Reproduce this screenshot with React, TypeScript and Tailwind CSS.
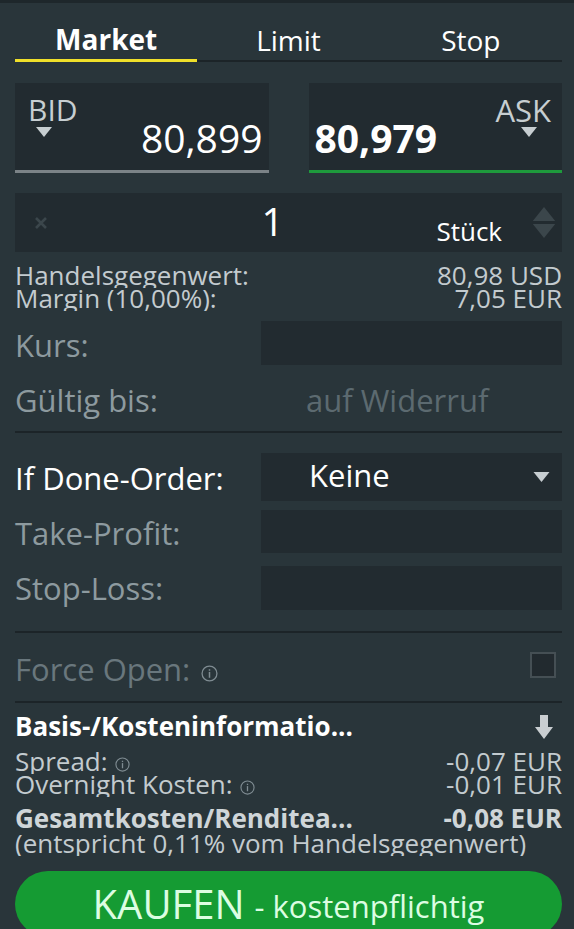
const font = { fontFamily: '"Open Sans", "Noto Sans", sans-serif' };

function Tri({ up = false, className = "" }: { up?: boolean; className?: string }) {
  return (
    <svg viewBox="0 0 16 10" className={className}>
      <path d={up ? "M0 10 L8 0 L16 10 Z" : "M0 0 L16 0 L8 10 Z"} fill="currentColor" />
    </svg>
  );
}

function Info({ size = "w-[15px] h-[15px] ml-[7px]" }: { size?: string }) {
  return (
    <svg viewBox="0 0 16 16" className={`inline-block ${size} align-[-1px] text-[#7f8c92]`}>
      <circle cx="8" cy="8" r="7" fill="none" stroke="currentColor" strokeWidth="1.2" />
      <rect x="7.3" y="6.5" width="1.4" height="5.5" fill="currentColor" />
      <rect x="7.3" y="4" width="1.4" height="1.4" fill="currentColor" />
    </svg>
  );
}

function Row({ label, value, bold = false }: { label: React.ReactNode; value?: string; bold?: boolean }) {
  return (
    <div
      className={`flex justify-between overflow-hidden text-[26px] leading-[18px] pt-[1px] ${
        bold ? "font-bold h-[25px] text-[#cfd5d8]" : "h-[23px] text-[#c3cbcf]"
      }`}
    >
      <span className="whitespace-nowrap">{label}</span>
      <span className="whitespace-nowrap">{value}</span>
    </div>
  );
}

export default function App() {
  return (
    <div className="w-[574px] h-[929px] overflow-hidden bg-[#29353a] text-white" style={font}>
      <div className="h-[3px] bg-[#1e272b]" />
      <div className="pl-[15px] pr-[12px]">
        {/* tabs */}
        <div className="grid grid-cols-3 h-[59px] items-end">
          <div className="h-full flex items-end justify-center pb-[3px] border-b-[3px] border-[#f0e02a] text-[28px] font-bold leading-[34px]">Market</div>
          <div className="h-full flex items-end justify-center pb-[3px] border-b-2 border-[#1c2428] text-[28px] leading-[34px]">Limit</div>
          <div className="h-full flex items-end justify-center pb-[3px] border-b-2 border-[#1c2428] text-[28px] leading-[34px]">Stop</div>
        </div>

        {/* bid / ask */}
        <div className="grid grid-cols-2 gap-10 mt-[21px]">
          <div className="h-[90px] bg-[#222b30] border-b-[3px] border-[#7b8387] flex justify-between pl-[13px] pr-[6px]">
            <div className="flex flex-col pt-[11px]">
              <span className="text-[30px] leading-[32px] text-[#c7ced1]">BID</span>
              <Tri className="w-[16px] h-[10px] ml-[8px] mt-[1px] text-[#c7ced1]" />
            </div>
            <span className="self-end pb-[11px] text-[39px] leading-[42px]">80,899</span>
          </div>
          <div className="h-[90px] bg-[#222b30] border-b-[3px] border-[#1e9a3c] flex justify-between pl-[6px] pr-[11px]">
            <span className="self-end pb-[11px] text-[39px] leading-[42px] font-bold">80,979</span>
            <div className="flex flex-col items-end pt-[11px]">
              <span className="text-[31px] leading-[32px] text-[#c7ced1]">ASK</span>
              <Tri className="w-[16px] h-[10px] mr-[14px] mt-[1px] text-[#c7ced1]" />
            </div>
          </div>
        </div>

        {/* quantity */}
        <div className="mt-[20px] h-[59px] bg-[#222b30] flex items-center pl-[20px] pr-[6px]">
          <svg viewBox="0 0 12 12" className="w-[12px] h-[12px] text-[#3b464b]">
            <path d="M1 1 L11 11 M11 1 L1 11" stroke="currentColor" strokeWidth="2.6" />
          </svg>
          <span className="flex-1 text-center text-[39px] leading-[42px] pl-[62px] pb-[4px]">1</span>
          <span className="text-[26px] leading-none self-end pb-[8px] mr-[30px]">Stück</span>
          <div className="flex flex-col gap-[3px]">
            <Tri up className="w-[24px] h-[14px] text-[#3b464b]" />
            <Tri className="w-[24px] h-[14px] text-[#3b464b]" />
          </div>
        </div>

        {/* info */}
        <div className="mt-[13px]">
          <Row label="Handelsgegenwert:" value="80,98 USD" />
          <Row label="Margin (10,00%):" value="7,05 EUR" />
        </div>

        {/* kurs / gültig */}
        <div className="grid grid-cols-[246px_1fr] items-center mt-[10px] text-[31px] text-[#8d9a9f]">
          <span className="leading-[40px] pt-[4px]">Kurs:</span>
          <div className="h-[44px] bg-[#222b30]" />
          <span className="mt-[13px] leading-[44px]">Gültig bis:</span>
          <span className="mt-[13px] leading-[44px] pl-[45px] text-[#5c6a70]">auf Widerruf</span>
        </div>

        <div className="mt-[9px] h-[2px] bg-[#1c2428]" />

        {/* if done */}
        <div className="grid grid-cols-[246px_1fr] items-center mt-[20px] text-[31px]">
          <span className="leading-[45px] pt-[3px]">If Done-Order:</span>
          <div className="h-[48px] bg-[#222b30] flex items-center justify-between pl-[48px] pr-[9px]">
            <span className="leading-[40px] pb-[4px]">Keine</span>
            <Tri className="w-[23px] h-[10px] text-[#c7ced1]" />
          </div>
          <span className="mt-[9px] leading-[40px] pt-[3px] text-[#8d9a9f]">Take-Profit:</span>
          <div className="mt-[9px] h-[43px] bg-[#222b30]" />
          <span className="mt-[13px] leading-[44px] text-[#8d9a9f]">Stop-Loss:</span>
          <div className="mt-[13px] h-[44px] bg-[#222b30]" />
        </div>

        <div className="mt-[21px] h-[2px] bg-[#1c2428]" />

        {/* force open */}
        <div className="flex items-center justify-between h-[68px] text-[31px] text-[#69777d]">
          <span className="pt-[4px] whitespace-nowrap">
            Force Open:
            <Info size="w-[17px] h-[17px] ml-[11px]" />
          </span>
          <div className="w-[26px] h-[26px] mr-[6px] mb-[4px] border-2 border-[#454f54] bg-[#222a2f]" />
        </div>

        <div className="h-[2px] bg-[#1c2428]" />

        {/* costs */}
        <div className="flex items-center justify-between mt-[10px] h-[27px]">
          <span className="text-[26px] font-bold leading-[27px] whitespace-nowrap">Basis-/Kosteninformatio...</span>
          <svg viewBox="0 0 18 24" className="w-[18px] h-[24px] mr-[9px] text-[#c9ced1]">
            <path d="M5 0 H13 V12 H18 L9 24 L0 12 H5 Z" fill="currentColor" />
          </svg>
        </div>
        <div className="mt-[11px]">
          <Row label={<>Spread:<Info /></>} value="-0,07 EUR" />
          <Row label={<>Overnight Kosten:<Info /></>} value="-0,01 EUR" />
        </div>
        <div className="mt-[11px]">
          <Row bold label="Gesamtkosten/Renditea..." value="-0,08 EUR" />
          <div className="h-[23px] leading-[18px] pt-[1px] overflow-hidden whitespace-nowrap text-[26px] text-[#c3cbcf]">(entspricht 0,11% vom Handelsgegenwert)</div>
        </div>

        {/* button */}
        <div className="mt-[15px] h-[66px] rounded-full bg-[#159b33] flex items-center justify-center text-[#dcfde2]">
          <span className="text-[40px] leading-[46px]">KAUFEN</span>
          <span className="text-[31px] leading-[46px] ml-[10px] pt-[4px] whitespace-nowrap">- kostenpflichtig</span>
        </div>
      </div>
    </div>
  );
}
